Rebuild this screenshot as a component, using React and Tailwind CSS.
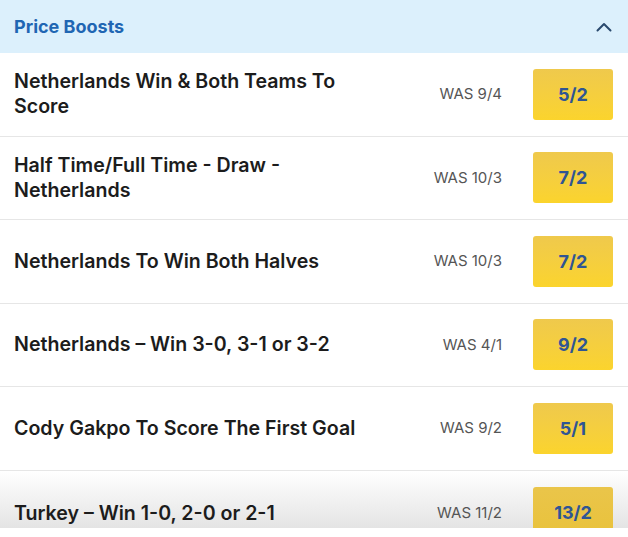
import React from "react";

const rows = [
  { title: "Netherlands Win & Both Teams To Score", was: "WAS 9/4", odds: "5/2" },
  { title: "Half Time/Full Time - Draw - Netherlands", was: "WAS 10/3", odds: "7/2" },
  { title: "Netherlands To Win Both Halves", was: "WAS 10/3", odds: "7/2" },
  { title: "Netherlands – Win 3-0, 3-1 or 3-2", was: "WAS 4/1", odds: "9/2" },
  { title: "Cody Gakpo To Score The First Goal", was: "WAS 9/2", odds: "5/1" },
];

function Row({ r }) {
  return (
    <div className="flex items-center h-[83.5px] pl-[14px] pr-[15px] border-b border-[#e6e6e6]">
      <div className="flex-1 text-[19.6px] leading-[25px] font-semibold text-[#1c1c1c] pr-[60px]">{r.title}</div>
      <div className="text-[15px] text-[#555] mr-[31px] whitespace-nowrap">{r.was}</div>
      <div className="w-[80px] h-[51px] rounded-[3px] bg-gradient-to-b from-[#efc94c] to-[#fbd42c] flex items-center justify-center text-[18px] font-bold text-[#2f5594]">
        {r.odds}
      </div>
    </div>
  );
}

export default function App() {
  return (
    <div className="w-[628px] h-[537px] bg-white overflow-hidden" style={{ fontFamily: "Inter, Roboto, sans-serif" }}>
      <div className="h-[53px] bg-[#dcf0fc] flex items-center justify-between pl-[14px] pr-[16px]">
        <span className="text-[18px] font-bold text-[#1f66b3]">Price Boosts</span>
        <svg width="16" height="10" viewBox="0 0 16 10" fill="none">
          <path d="M1.5 8.5L8 2L14.5 8.5" stroke="#2a4a6e" strokeWidth="2" strokeLinecap="round" strokeLinejoin="round" />
        </svg>
      </div>
      {rows.map((r, i) => (
        <Row key={i} r={r} />
      ))}
      <div className="h-[57px] overflow-hidden bg-gradient-to-b from-white to-[#e4e4e4]">
        <div className="flex items-start h-[83px] pl-[14px] pr-[15px] pt-[16px]">
          <div className="flex-1 text-[19.6px] leading-[25px] font-semibold text-[#1c1c1c] pt-[14px]">Turkey – Win 1-0, 2-0 or 2-1</div>
          <div className="text-[15px] text-[#555] mr-[31px] whitespace-nowrap pt-[15px]">WAS 11/2</div>
          <div className="w-[80px] h-[51px] rounded-[3px] bg-gradient-to-b from-[#eac54a] to-[#e9c23a] flex items-center justify-center text-[18px] font-bold text-[#2f5594]">
            13/2
          </div>
        </div>
      </div>
    </div>
  );
}
